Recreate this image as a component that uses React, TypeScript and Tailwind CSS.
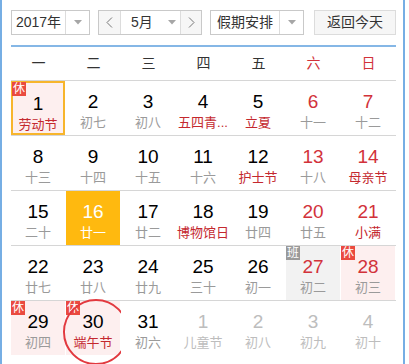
import React from "react";

type Cell = {
  d: string;
  l: string;
  numRed?: boolean;
  lRed?: boolean;
  other?: boolean;
  badge?: "休" | "班";
  bg?: "pink" | "gray";
  today?: boolean;
  selected?: boolean;
  circle?: boolean;
};

const rows: Cell[][] = [
  [
    { d: "1", l: "劳动节", lRed: true, badge: "休", bg: "pink", today: true },
    { d: "2", l: "初七" },
    { d: "3", l: "初八" },
    { d: "4", l: "五四青...", lRed: true },
    { d: "5", l: "立夏", lRed: true },
    { d: "6", l: "十一", numRed: true },
    { d: "7", l: "十二", numRed: true },
  ],
  [
    { d: "8", l: "十三" },
    { d: "9", l: "十四" },
    { d: "10", l: "十五" },
    { d: "11", l: "十六" },
    { d: "12", l: "护士节", lRed: true },
    { d: "13", l: "十八", numRed: true },
    { d: "14", l: "母亲节", numRed: true, lRed: true },
  ],
  [
    { d: "15", l: "二十" },
    { d: "16", l: "廿一", selected: true },
    { d: "17", l: "廿二" },
    { d: "18", l: "博物馆日", lRed: true },
    { d: "19", l: "廿四" },
    { d: "20", l: "廿五", numRed: true },
    { d: "21", l: "小满", numRed: true, lRed: true },
  ],
  [
    { d: "22", l: "廿七" },
    { d: "23", l: "廿八" },
    { d: "24", l: "廿九" },
    { d: "25", l: "三十" },
    { d: "26", l: "初一" },
    { d: "27", l: "初二", numRed: true, badge: "班", bg: "gray" },
    { d: "28", l: "初三", numRed: true, badge: "休", bg: "pink" },
  ],
  [
    { d: "29", l: "初四", badge: "休", bg: "pink" },
    { d: "30", l: "端午节", lRed: true, badge: "休", bg: "pink", circle: true },
    { d: "31", l: "初六" },
    { d: "1", l: "儿童节", other: true },
    { d: "2", l: "初八", other: true },
    { d: "3", l: "初九", other: true },
    { d: "4", l: "初十", other: true },
  ],
];

const Arrow = () => (
  <svg width="8" height="5" viewBox="0 0 8 5">
    <polygon points="0,0 8,0 4,4.5" fill="#a6a6a6" />
  </svg>
);

const Chevron = ({ dir }: { dir: "l" | "r" }) => (
  <svg width="7" height="11" viewBox="0 0 7 11">
    <polyline
      points={dir === "l" ? "6,0.5 1,5.5 6,10.5" : "1,0.5 6,5.5 1,10.5"}
      fill="none"
      stroke="#777"
      strokeWidth="1"
    />
  </svg>
);

function DayCell({ c }: { c: Cell }) {
  let bg = "bg-white";
  if (c.bg === "pink") bg = "bg-[#fdefef]";
  if (c.bg === "gray") bg = "bg-[#f2f2f2]";
  if (c.selected) bg = "bg-[#ffb90f]";
  let numColor = "text-[#000]";
  if (c.numRed) numColor = "text-[#d2323a]";
  if (c.other) numColor = "text-[#bdbdbd]";
  if (c.selected) numColor = "text-white";
  let lColor = "text-[#9a9a9a]";
  if (c.lRed) lColor = "text-[#c4282e]";
  if (c.other) lColor = "text-[#bdbdbd]";
  if (c.selected) lColor = "text-white";
  return (
    <div className="relative h-[54px] pr-[1px]">
      <div
        className={`relative h-full flex flex-col items-center pt-[10px] ${bg} ${
          c.today ? "border-2 border-[#f7b52c] pt-[8px]" : ""
        }`}
      >
        <div className={`text-[19px] leading-[22px] ${numColor}`}>{c.d}</div>
        <div className={`text-[13px] leading-[18px] mt-[1px] whitespace-nowrap ${lColor}`}>{c.l}</div>
        {c.badge && (
          <div
            className={`absolute ${c.today ? "left-[-1px] top-[-1px]" : "left-0 top-0"} w-[14px] h-[14px] flex items-center justify-center text-[12px] leading-none text-white ${
              c.badge === "班" ? "bg-[#9a9a9a]" : "bg-[#ea4a3f]"
            }`}
          >
            {c.badge}
          </div>
        )}
      </div>
      {c.circle && (
        <div className="absolute left-[-3px] top-[-2px] w-[66px] h-[66px] rounded-full border-2 border-[#e2393f]" />
      )}
    </div>
  );
}

export default function App() {
  const weekdays = ["一", "二", "三", "四", "五", "六", "日"];
  return (
    <div
      className="w-[409px] h-[364px] bg-white overflow-hidden"
      style={{ fontFamily: '"Liberation Sans", "Noto Sans CJK SC", sans-serif' }}
    >
      <div className="w-[405px] h-[364px] border-l-2 border-r-2 border-[#76aee4] pl-[9px] pr-[7px] pt-[10px]">
        <div className="flex items-center h-[25px] text-[14px] text-[#333]">
          <div className="flex h-[25px] w-[79px] border border-[#c9c9c9]">
            <div className="w-[54px] flex items-center justify-center border-r border-[#dcdcdc]">2017年</div>
            <div className="flex-1 flex items-center justify-center">
              <Arrow />
            </div>
          </div>
          <div className="ml-[8px] flex h-[25px] w-[104px] border border-[#c9c9c9]">
            <div className="w-[22px] flex items-center justify-center bg-[#f6f6f6] border-r border-[#dcdcdc]">
              <Chevron dir="l" />
            </div>
            <div className="w-[60px] flex items-center border-r border-[#dcdcdc]">
              <span className="ml-[10px]">5月</span>
              <span className="ml-[15px] flex">
                <Arrow />
              </span>
            </div>
            <div className="flex-1 flex items-center justify-center bg-[#f6f6f6]">
              <Chevron dir="r" />
            </div>
          </div>
          <div className="ml-[8px] flex h-[25px] w-[94px] border border-[#c9c9c9]">
            <div className="w-[69px] flex items-center justify-center border-r border-[#dcdcdc]">假期安排</div>
            <div className="flex-1 flex items-center justify-center">
              <Arrow />
            </div>
          </div>
          <div className="ml-[10px] flex h-[25px] w-[82px] items-center justify-center border border-[#dcdcdc] bg-[#f6f6f6]">
            返回今天
          </div>
        </div>
        <div className="mt-[10px] h-[2px] bg-[#85b7e6]" />
        <div className="grid grid-cols-7 h-[33px] items-center text-[14px]">
          {weekdays.map((w, i) => (
            <div key={w} className={`text-center ${i >= 5 ? "text-[#d2323a]" : "text-[#333]"}`}>
              {w}
            </div>
          ))}
        </div>
        <div>
          {rows.map((r, ri) => (
            <div key={ri} className="grid grid-cols-7 border-t border-[#d6d6d6]">
              {r.map((c, ci) => (
                <DayCell key={ci} c={c} />
              ))}
            </div>
          ))}
        </div>
      </div>
    </div>
  );
}
